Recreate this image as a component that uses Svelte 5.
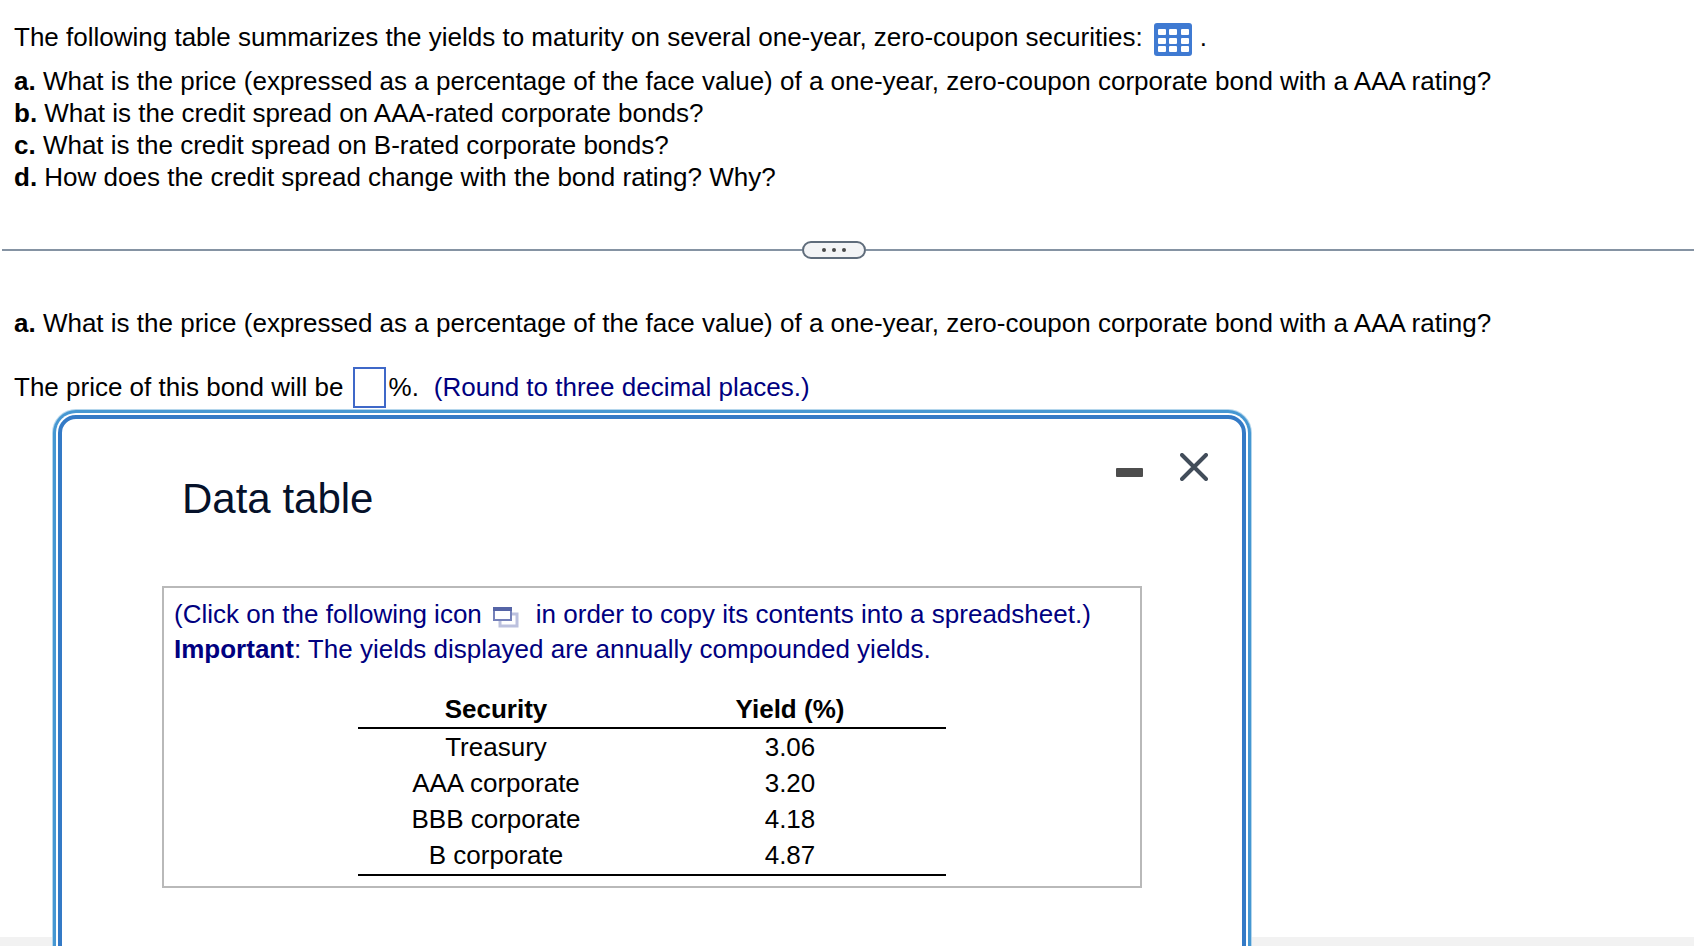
<script>
  let answer = '';
  let isTableOpen = true;
  let isMinimized = false;
  let isPromptOpen = true;

  const questions = [
    { id: 'a', text: 'What is the price (expressed as a percentage of the face value) of a one-year, zero-coupon corporate bond with a AAA rating?' },
    { id: 'b', text: 'What is the credit spread on AAA-rated corporate bonds?' },
    { id: 'c', text: 'What is the credit spread on B-rated corporate bonds?' },
    { id: 'd', text: 'How does the credit spread change with the bond rating? Why?' }
  ];

  const securities = [
    { name: 'Treasury', rate: '3.06' },
    { name: 'AAA corporate', rate: '3.20' },
    { name: 'BBB corporate', rate: '4.18' },
    { name: 'B corporate', rate: '4.87' }
  ];

  function openTable() {
    isTableOpen = true;
    isMinimized = false;
  }

  // Tab separated, so it pastes into spreadsheet cells
  function copyTable() {
    const rows = securities.map((s) => s.name + '\t' + s.rate);
    navigator.clipboard?.writeText(['Security\tYield (%)', ...rows].join('\n'));
  }
</script>

<div class="page">
  <main class="sheet">
    {#if isPromptOpen}
      <section class="prompt">
        <div class="intro">
          <span>The following table summarizes the yields to maturity on several one-year, zero-coupon securities:</span>
          <button class="icon-btn table-btn" aria-label="Open data table" on:click={openTable}>
            <svg width="38" height="34" viewBox="0 0 38 34">
              <rect width="38" height="33" rx="3" fill="#3f7ad2" />
              <g fill="#fff">
                {#each [6, 15, 23] as y}
                  {#each [4, 15, 27] as x}
                    <rect {x} {y} width="8" height="6" rx="1" />
                  {/each}
                {/each}
              </g>
            </svg>
          </button>
          <span>.</span>
        </div>
        {#each questions as q}
          <p><b>{q.id}.</b> {q.text}</p>
        {/each}
      </section>
    {/if}

    <div class="divider">
      <button class="pill" aria-label="Toggle question" on:click={() => (isPromptOpen = !isPromptOpen)}>
        <i></i><i></i><i></i>
      </button>
    </div>

    <section class="part">
      <p><b>{questions[0].id}.</b> {questions[0].text}</p>
      <div class="answer">
        <label for="price">The price of this bond will be</label>
        <input id="price" type="text" bind:value={answer} />
        <span>%.</span>
        <span class="hint">(Round to three decimal places.)</span>
      </div>
    </section>
  </main>

  {#if isTableOpen}
    <div class="modal" class:minimized={isMinimized} role="dialog" aria-labelledby="modal-title">
      <header class="modal-head">
        <h2 id="modal-title">Data table</h2>
        <div class="modal-actions">
          <button class="icon-btn" aria-label="Minimize" on:click={() => (isMinimized = !isMinimized)}>
            <svg width="28" height="28" viewBox="0 0 28 28"><rect x="0" y="15" width="27" height="9" rx="1" fill="#4d4d4d" /></svg>
          </button>
          <button class="icon-btn" aria-label="Close" on:click={() => (isTableOpen = false)}>
            <svg width="28" height="28" viewBox="0 0 28 28">
              <path d="M2 2L26 26M26 2L2 26" stroke="#424d5a" stroke-width="4" stroke-linecap="round" />
            </svg>
          </button>
        </div>
      </header>

      {#if !isMinimized}
        <div class="data-box">
          <div class="note">
            <span>(Click on the following icon</span>
            <button class="icon-btn copy-btn" aria-label="Copy to spreadsheet" on:click={copyTable}>
              <svg width="26" height="22" viewBox="0 0 26 22">
                <rect x="7" y="8" width="17" height="12" fill="#fff" stroke="#bcc1de" stroke-width="3" />
                <rect x="1" y="2" width="17" height="12" fill="#fff" stroke="#7581b9" stroke-width="2" />
                <rect x="0" y="1" width="19" height="4" fill="#5564a6" />
              </svg>
            </button>
            <span>in order to copy its contents into a spreadsheet.)</span>
          </div>
          <p class="note"><b>Important</b>: The yields displayed are annually compounded yields.</p>

          <table>
            <thead>
              <tr><th>Security</th><th>Yield (%)</th></tr>
            </thead>
            <tbody>
              {#each securities as s}
                <tr><td>{s.name}</td><td>{s.rate}</td></tr>
              {/each}
            </tbody>
          </table>
        </div>
      {/if}
    </div>
  {/if}
</div>

<style>
  :global(body) {
    background: #f2f2f2;
  }
  .page {
    position: relative;
    height: 100vh;
    overflow: hidden;
    font-family: 'Liberation Sans', Arial, sans-serif;
    font-size: 26px;
    line-height: 32px;
    color: #000;
  }
  .sheet {
    box-sizing: border-box;
    height: calc(100vh - 9px);
    padding-top: 21px;
    background: #fff;
  }
  p { margin: 0; }
  .icon-btn {
    display: block;
    padding: 0;
    border: none;
    background: none;
    cursor: pointer;
  }
  .icon-btn svg { display: block; fill: none; }

  /* --- Question --- */
  .prompt, .part { padding: 0 14px; }
  .intro {
    display: flex;
    align-items: flex-start;
    height: 44px;
  }
  .table-btn { margin: 2px 8px 0 11px; }

  .divider {
    display: flex;
    align-items: center;
    height: 18px;
    margin: 48px 0;
    padding-left: 2px;
  }
  .divider::before, .divider::after {
    content: '';
    height: 2px;
    background: #8593a3;
  }
  .divider::before { flex: 800; }
  .divider::after { flex: 828; }
  .pill {
    box-sizing: border-box;
    display: flex;
    align-items: center;
    justify-content: center;
    gap: 6px;
    width: 64px;
    height: 18px;
    padding: 0;
    border: 2px solid #5f6c7b;
    border-radius: 9px;
    background: #f3f4f6;
    cursor: pointer;
  }
  .pill i {
    width: 4px;
    height: 4px;
    border-radius: 50%;
    background: #4a4a4a;
  }

  /* --- Answer row --- */
  .answer {
    display: flex;
    align-items: flex-start;
    margin-top: 28px;
    line-height: 40px;
  }
  .answer input {
    box-sizing: border-box;
    width: 33px;
    height: 41px;
    margin: 0 3px 0 9px;
    padding: 0 2px;
    border: 2px solid #3f68c8;
    background: #fff;
    font: inherit;
    outline: none;
  }
  .hint { margin-left: 15px; color: #000080; }

  /* --- Data table window --- */
  .modal {
    position: absolute;
    top: 415px;
    left: 58px;
    box-sizing: border-box;
    width: 70%;
    min-width: 1188px;
    min-height: 640px;
    padding: 34px 34px 0 100px;
    border: 4px solid #347ac6;
    border-radius: 18px;
    background: #fff;
    box-shadow: 0 0 0 2px #fff, 0 0 0 5px #4697d2, 0 0 0 6px #b4d6ec;
  }
  .modal.minimized { min-height: 140px; }
  .modal-head {
    display: flex;
    justify-content: space-between;
    height: 133px;
  }
  h2 {
    margin: 22px 0 0 20px;
    font-size: 42px;
    font-weight: 400;
    line-height: 48px;
    color: #05112a;
  }
  .modal-actions {
    display: flex;
    align-items: flex-start;
    gap: 36px;
  }
  .data-box {
    margin-right: 66px;
    padding: 9px 10px 10px;
    border: 2px solid #b9b9b9;
  }
  .note {
    display: flex;
    align-items: flex-start;
    line-height: 35px;
    color: #000080;
  }
  p.note { display: block; }
  .copy-btn { margin: 9px 17px 0 11px; }

  table {
    width: 588px;
    margin: 24px auto 0;
    table-layout: fixed;
    border-collapse: separate;
    border-spacing: 0;
    border-bottom: 2px solid #000;
  }
  th, td {
    padding: 0 18px 0 0;
    line-height: 36px;
    text-align: center;
  }
  th {
    border-bottom: 2px solid #000;
    font-weight: 700;
  }
  tbody tr:last-child td { padding-bottom: 1px; }
</style>
